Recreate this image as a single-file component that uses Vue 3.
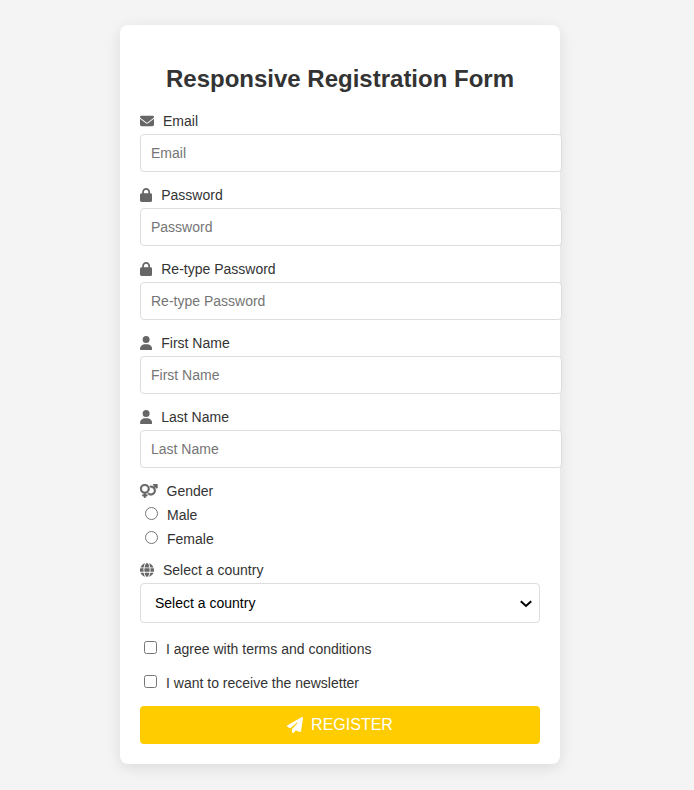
<script setup>
import { ref } from 'vue'

const icons = {
  envelope: {
    w: 512,
    d: 'M48 64C21.5 64 0 85.5 0 112c0 15.1 7.1 29.3 19.2 38.4L236.8 313.6c11.4 8.5 27 8.5 38.4 0L492.8 150.4c12.1-9.1 19.2-23.3 19.2-38.4c0-26.5-21.5-48-48-48H48zM0 176V384c0 35.3 28.7 64 64 64H448c35.3 0 64-28.7 64-64V176L294.4 339.2c-22.8 17.1-54 17.1-76.8 0L0 176z'
  },
  lock: {
    w: 448,
    d: 'M144 144v48H304V144c0-44.2-35.8-80-80-80s-80 35.8-80 80zM80 192V144C80 64.5 144.5 0 224 0s144 64.5 144 144v48h16c35.3 0 64 28.7 64 64V448c0 35.3-28.7 64-64 64H64c-35.3 0-64-28.7-64-64V256c0-35.3 28.7-64 64-64H80z'
  },
  user: {
    w: 448,
    d: 'M224 256A128 128 0 1 0 224 0a128 128 0 1 0 0 256zm-45.7 48C79.8 304 0 383.8 0 482.3C0 498.7 13.3 512 29.7 512H418.3c16.4 0 29.7-13.3 29.7-29.7C448 383.8 368.2 304 269.7 304H178.3z'
  },
  gender: {
    w: 640,
    d: 'M176 288a112 112 0 1 0 0-224 112 112 0 1 0 0 224zM352 176c0 86.3-62.1 158.1-144 173.1V384h32c17.7 0 32 14.3 32 32s-14.3 32-32 32H208v32c0 17.7-14.3 32-32 32s-32-14.3-32-32V448H112c-17.7 0-32-14.3-32-32s14.3-32 32-32h32V349.1C62.1 334.1 0 262.3 0 176C0 78.8 78.8 0 176 0s176 78.8 176 176zM271.9 360.6c19.3-10.1 36.9-23.1 52.1-38.4c20 18.5 46.7 29.8 76.1 29.8c61.9 0 112-50.1 112-112s-50.1-112-112-112c-7.2 0-14.3 .7-21.1 2c-4.9-21.5-13-41.7-24-60.2C369.3 66 384.4 64 400 64c37 0 71.4 11.4 99.8 31l20.6-20.6L487 41c-6.9-6.9-8.9-17.2-5.2-26.2S494.3 0 504 0H616c13.3 0 24 10.7 24 24V136c0 9.7-5.8 18.5-14.8 22.2s-19.3 1.7-26.2-5.2l-33.4-33.4L545 140.2c19.5 28.4 31 62.7 31 99.8c0 97.2-78.8 176-176 176c-50.5 0-96-21.3-128.1-55.4z'
  },
  globe: {
    w: 512,
    d: 'M352 256c0 22.2-1.2 43.6-3.3 64H163.3c-2.2-20.4-3.3-41.8-3.3-64s1.2-43.6 3.3-64H348.7c2.2 20.4 3.3 41.8 3.3 64zm28.8-64H503.9c5.3 20.5 8.1 41.9 8.1 64s-2.8 43.5-8.1 64H380.8c2.1-20.6 3.2-42 3.2-64s-1.1-43.4-3.2-64zm112.6-32H376.7c-10-63.9-29.8-117.4-55.3-151.6c78.3 20.7 142 77.5 171.9 151.6zm-149.1 0H167.7c6.1-36.4 15.5-68.6 27-94.7c10.5-23.6 22.2-40.7 33.5-51.5C239.4 3.2 248.7 0 256 0s16.6 3.2 27.8 13.8c11.3 10.8 23 27.9 33.5 51.5c11.6 26 20.9 58.2 27 94.7zm-209 0H18.6C48.6 85.9 112.2 29.1 190.6 8.4C165.1 42.6 145.3 96.1 135.3 160zM8.1 192H131.2c-2.1 20.6-3.2 42-3.2 64s1.1 43.4 3.2 64H8.1C2.8 299.5 0 278.1 0 256s2.8-43.5 8.1-64zM194.7 446.6c-11.6-26-20.9-58.2-27-94.6H344.3c-6.1 36.4-15.5 68.6-27 94.6c-10.5 23.6-22.2 40.7-33.5 51.5C272.6 508.8 263.3 512 256 512s-16.6-3.2-27.8-13.8c-11.3-10.8-23-27.9-33.5-51.5zM135.3 352c10 63.9 29.8 117.4 55.3 151.6C112.2 482.9 48.6 426.1 18.6 352H135.3zm358.1 0c-30 74.1-93.6 130.9-171.9 151.6c25.5-34.2 45.2-87.7 55.3-151.6H493.4z'
  }
}

const fields = [
  { id: 'email', label: 'Email', type: 'email', icon: icons.envelope },
  { id: 'password', label: 'Password', type: 'password', icon: icons.lock },
  { id: 'retype', label: 'Re-type Password', type: 'password', icon: icons.lock },
  { id: 'first', label: 'First Name', type: 'text', icon: icons.user },
  { id: 'last', label: 'Last Name', type: 'text', icon: icons.user }
]

const gender = ref('')
const terms = ref(false)
const newsletter = ref(false)
</script>

<template>
  <div class="page">
    <main class="card">
      <h2 class="title">Responsive Registration Form</h2>
      <form @submit.prevent>
        <div v-for="f in fields" :key="f.id" class="group">
          <label class="label" :for="f.id">
            <svg class="icon" :viewBox="`0 0 ${f.icon.w} 512`"><path :d="f.icon.d" /></svg>
            <span>{{ f.label }}</span>
          </label>
          <input :id="f.id" class="field" :type="f.type" :placeholder="f.label" />
        </div>

        <div class="gender">
          <div class="label">
            <svg class="icon bold" :viewBox="`0 0 ${icons.gender.w} 512`"><path :d="icons.gender.d" /></svg>
            <span>Gender</span>
          </div>
          <label class="choice"><input v-model="gender" type="radio" value="male" /><span>Male</span></label>
          <label class="choice"><input v-model="gender" type="radio" value="female" /><span>Female</span></label>
        </div>

        <div class="group">
          <label class="label" for="country">
            <svg class="icon" :viewBox="`0 0 ${icons.globe.w} 512`"><path :d="icons.globe.d" /></svg>
            <span>Select a country</span>
          </label>
          <div class="select-wrap">
            <select id="country" class="select"><option>Select a country</option></select>
            <svg class="chevron" viewBox="0 0 12 8"><path d="M0.8 1.2 6 6 11.2 1.2" /></svg>
          </div>
        </div>

        <label class="check"><input v-model="terms" type="checkbox" /><span>I agree with terms and conditions</span></label>
        <label class="check"><input v-model="newsletter" type="checkbox" /><span>I want to receive the newsletter</span></label>

        <button class="submit" type="submit">
          <svg class="plane" viewBox="0 0 512 512"><path d="M498.1 5.6c10.1 7 15.4 19.1 13.5 31.2l-64 416c-1.5 9.7-7.4 18.2-16 23s-18.9 5.4-28 1.6L284 427.7l-68.5 74.1c-8.9 9.7-22.9 12.9-35.2 8.1S160 493.2 160 480V396.4c0-4 1.5-7.8 4.2-10.7L331.8 202.8c5.8-6.3 5.6-16-.4-22s-15.7-6.4-22-.7L106 360.8 17.7 316.6C7.1 311.3 .3 300.7 0 288.9s5.9-22.8 16.1-28.7l448-256c10.7-6.1 23.9-5.5 34 1.4z" /></svg>
          <span>REGISTER</span>
        </button>
      </form>
    </main>
  </div>
</template>

<style>
body {
  background: #f4f4f4;
}
</style>

<style scoped>
.page {
  box-sizing: border-box;
  min-height: 100vh;
  padding: 25px 0 26px 120px;
}
.card {
  box-sizing: border-box;
  width: 440px;
  height: 739px;
  padding: 40px 20px 20px;
  border-radius: 8px;
  background: #fff;
  box-shadow: 0 4px 15px rgba(0, 0, 0, 0.1);
  color: #333;
  font-family: Arial, "Liberation Sans", sans-serif;
  font-size: 14px;
  line-height: 16px;
}
.title {
  margin: 0 0 20px;
  font-size: 24px;
  line-height: 28px;
  text-align: center;
}
.group {
  margin-bottom: 15px;
}
.label {
  display: flex;
  align-items: center;
  gap: 9px;
  height: 16px;
  margin-bottom: 5px;
}
.icon {
  height: 14px;
  fill: #666;
}
.bold {
  stroke: #666;
  stroke-width: 14;
}
.field {
  display: block;
  box-sizing: border-box;
  width: 422px;
  height: 38px;
  padding: 10px;
  border: 1px solid #ddd;
  border-radius: 4px;
  font: inherit;
}
.gender {
  margin-bottom: 15px;
}
.choice {
  display: flex;
  height: 16px;
  margin-top: 8px;
}
.gender .label {
  margin-bottom: 0;
}
.choice input {
  width: 13px;
  height: 13px;
  margin: 0 9px 0 5px;
}
.select-wrap {
  position: relative;
}
.select {
  display: block;
  width: 100%;
  height: 40px;
  padding: 10px 14px;
  border: 1px solid #ddd;
  border-radius: 4px;
  background: #fff;
  color: #000;
  font: inherit;
  appearance: none;
}
.chevron {
  position: absolute;
  top: 17px;
  right: 8px;
  width: 12px;
  height: 8px;
  fill: none;
  stroke: #000;
  stroke-width: 2;
  pointer-events: none;
}
.check {
  display: flex;
  height: 16px;
  margin-top: 18px;
}
.check input {
  width: 13px;
  height: 13px;
  margin: 0 9px 0 4px;
}
.submit {
  display: flex;
  align-items: center;
  justify-content: center;
  gap: 8px;
  width: 100%;
  height: 38px;
  margin-top: 15px;
  padding: 0;
  border: 0;
  border-radius: 4px;
  background: #fc0;
  color: #fff;
  font: 16px/18px Arial, "Liberation Sans", sans-serif;
}
.plane {
  width: 16px;
  height: 16px;
  fill: #fff;
}
</style>
